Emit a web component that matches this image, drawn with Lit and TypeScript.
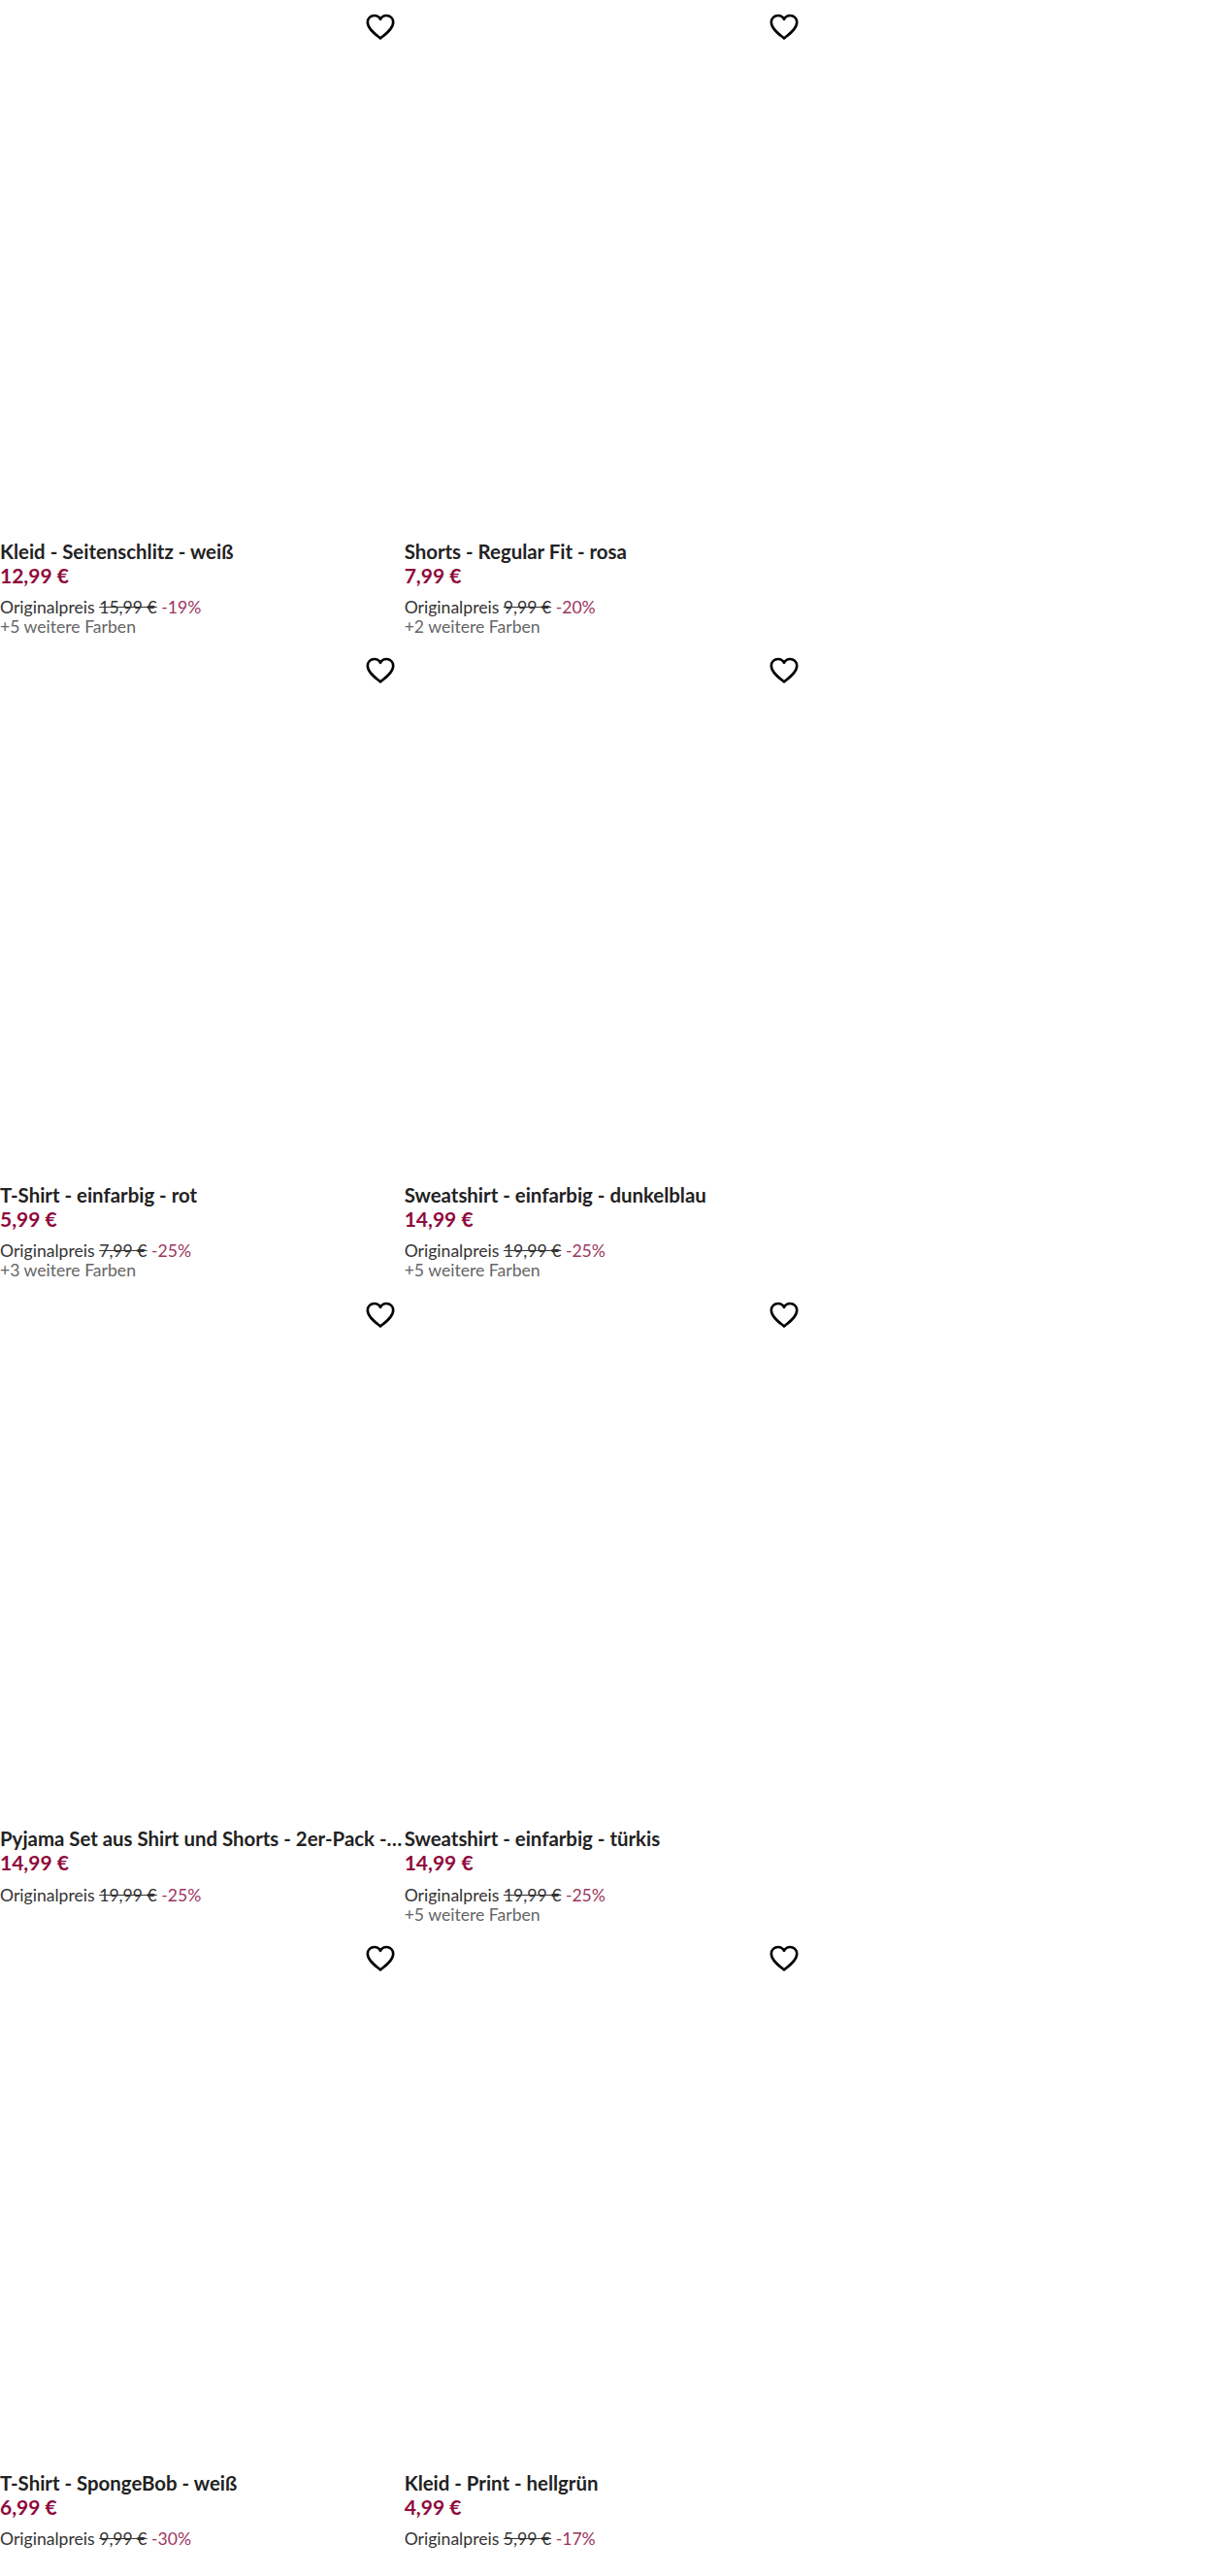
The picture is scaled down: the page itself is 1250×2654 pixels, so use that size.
import { LitElement, html, css } from "lit";
import { customElement } from "lit/decorators.js";

interface Item { title: string; price: string; was: string; off: string; more?: string }

const items: Item[] = [
  { title: "Kleid - Seitenschlitz - weiß", price: "12,99 €", was: "15,99 €", off: "-19%", more: "+5 weitere Farben" },
  { title: "Shorts - Regular Fit - rosa", price: "7,99 €", was: "9,99 €", off: "-20%", more: "+2 weitere Farben" },
  { title: "T-Shirt - einfarbig - rot", price: "5,99 €", was: "7,99 €", off: "-25%", more: "+3 weitere Farben" },
  { title: "Sweatshirt - einfarbig - dunkelblau", price: "14,99 €", was: "19,99 €", off: "-25%", more: "+5 weitere Farben" },
  { title: "Pyjama Set aus Shirt und Shorts - 2er-Pack - weiß", price: "14,99 €", was: "19,99 €", off: "-25%" },
  { title: "Sweatshirt - einfarbig - türkis", price: "14,99 €", was: "19,99 €", off: "-25%", more: "+5 weitere Farben" },
  { title: "T-Shirt - SpongeBob - weiß", price: "6,99 €", was: "9,99 €", off: "-30%" },
  { title: "Kleid - Print - hellgrün", price: "4,99 €", was: "5,99 €", off: "-17%" },
];

@customElement("app-root")
export class AppRoot extends LitElement {
  static styles = css`
    :host { display: block; background: #fff; font-family: "Lato", "Open Sans", sans-serif; color: #222; height: 2654px; overflow: hidden; }
    .grid { display: grid; grid-template-columns: repeat(3, minmax(0, 1fr)); grid-auto-rows: 663.33px; }
    .card { display: flex; flex-direction: column; min-width: 0; }
    .media { aspect-ratio: 3 / 4; flex: none; display: flex; justify-content: flex-end; align-items: flex-start; padding: 12px 9px 0 0; box-sizing: border-box; }
    .heart { width: 32px; height: 32px; display: block; }
    .title { font-size: 20.4px; font-weight: 700; line-height: 24px; color: #222; white-space: nowrap; overflow: hidden; text-overflow: ellipsis; }
    .price { font-size: 21px; font-weight: 700; line-height: 25px; color: #8f0a3c; }
    .orig { font-size: 17.6px; line-height: 20px; margin-top: 11.5px; color: #333; }
    .orig s { color: #333; }
    .off { color: #9c3560; }
    .more { font-size: 17.6px; line-height: 20px; color: #666; }
  `;

  render() {
    return html`<div class="grid">
      ${items.flatMap((it, i) => {
        const card = html`<div class="card">
          <div class="media">
            <svg class="heart" viewBox="0 0 32 32" fill="none" stroke="#000" stroke-width="2.6" stroke-linejoin="round">
              <path d="M16 27.6 C11 23.2 2.8 17.8 2.8 11 C2.8 6.8 6 4 9.8 4 C12.5 4 14.8 5.4 16 7.8 C17.2 5.4 19.5 4 22.2 4 C26 4 29.2 6.8 29.2 11 C29.2 17.8 21 23.2 16 27.6 Z" />
            </svg>
          </div>
          <div class="title">${it.title}</div>
          <div class="price">${it.price}</div>
          <div class="orig">Originalpreis <s>${it.was}</s> <span class="off">${it.off}</span></div>
          ${it.more ? html`<div class="more">${it.more}</div>` : ""}
        </div>`;
        return i % 2 === 1 ? [card, html`<div></div>`] : [card];
      })}
    </div>`;
  }
}
